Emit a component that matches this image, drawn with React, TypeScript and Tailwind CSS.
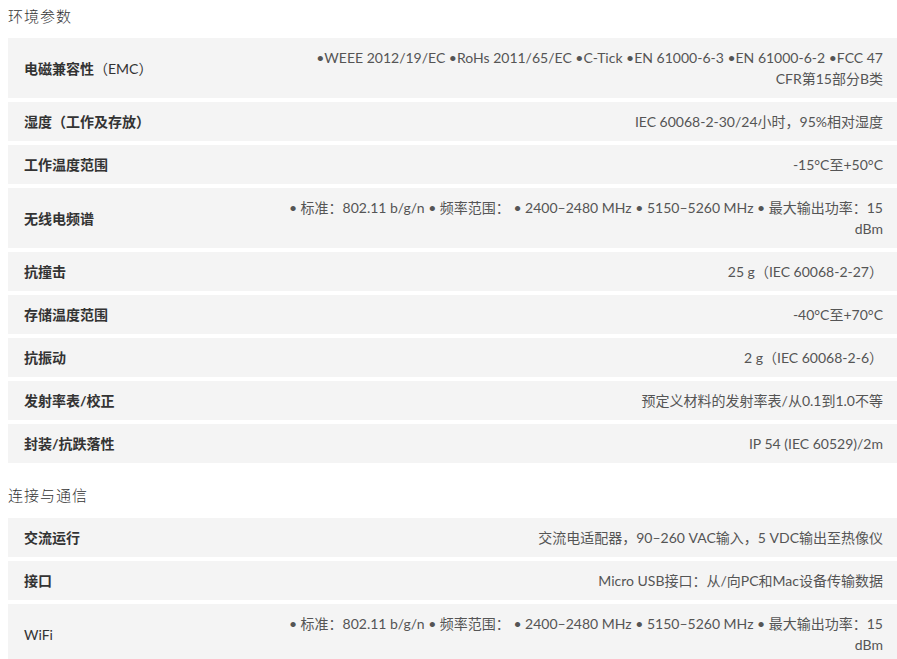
import React from "react";

type Row = { label: React.ReactNode; value: React.ReactNode; tall?: boolean };

const B = ({ children }: { children: React.ReactNode }) => (
  <span className="font-bold">{children}</span>
);
const N = ({ children }: { children: React.ReactNode }) => (
  <span className="font-normal">{children}</span>
);

const wireless = "• 标准：802.11 b/g/n • 频率范围： • 2400–2480 MHz • 5150–5260 MHz • 最大输出功率：15 dBm";

const env: Row[] = [
  {
    label: (
      <>
        <B>电磁兼容性</B>
        <N>（EMC）</N>
      </>
    ),
    value: (
      <>
        •WEEE 2012/19/EC •RoHs 2011/65/EC •C-Tick •EN 61000-6-3 •EN 61000-6-2 •FCC 47
        <br />
        CFR第15部分B类
      </>
    ),
  },
  { label: <B>湿度（工作及存放）</B>, value: "IEC 60068-2-30/24小时，95%相对湿度" },
  { label: <B>工作温度范围</B>, value: "-15°C至+50°C" },
  { label: <B>无线电频谱</B>, value: wireless },
  { label: <B>抗撞击</B>, value: "25 g（IEC 60068-2-27）" },
  { label: <B>存储温度范围</B>, value: "-40°C至+70°C" },
  { label: <B>抗振动</B>, value: "2 g（IEC 60068-2-6）" },
  { label: <B>发射率表/校正</B>, value: "预定义材料的发射率表/从0.1到1.0不等" },
  { label: <B>封装/抗跌落性</B>, value: "IP 54 (IEC 60529)/2m" },
];

const conn: Row[] = [
  { label: <B>交流运行</B>, value: "交流电适配器，90–260 VAC输入，5 VDC输出至热像仪" },
  { label: <B>接口</B>, value: "Micro USB接口：从/向PC和Mac设备传输数据" },
  { label: <N>WiFi</N>, value: wireless },
];

function Table({ rows }: { rows: Row[] }) {
  return (
    <div className="flex flex-col gap-[4px] ml-[8px]">
      {rows.map((r, i) => (
        <div
          key={i}
          className="flex items-center bg-[#f4f4f4] py-[9px] pl-[16px] pr-[14px] min-h-[39px]"
        >
          <div className="w-[260px] shrink-0 text-[14px] leading-[21px] text-[#333]">
            {r.label}
          </div>
          <div className="flex-1 text-right text-[14px] leading-[21px] text-[#555]">
            {r.value}
          </div>
        </div>
      ))}
    </div>
  );
}

export default function App() {
  return (
    <div
      className="w-[897px] h-[659px] overflow-hidden bg-white"
      style={{ fontFamily: 'Lato, "Noto Sans CJK SC", sans-serif' }}
    >
      <div className="pl-[8px] pt-[5px] h-[38px] text-[15px] leading-[22px] tracking-[1px] text-[#333] font-light">
        环境参数
      </div>
      <Table rows={env} />
      <div className="pl-[8px] pt-[21px] h-[55px] text-[15px] leading-[22px] tracking-[1px] text-[#333] font-light">
        连接与通信
      </div>
      <Table rows={conn} />
    </div>
  );
}
